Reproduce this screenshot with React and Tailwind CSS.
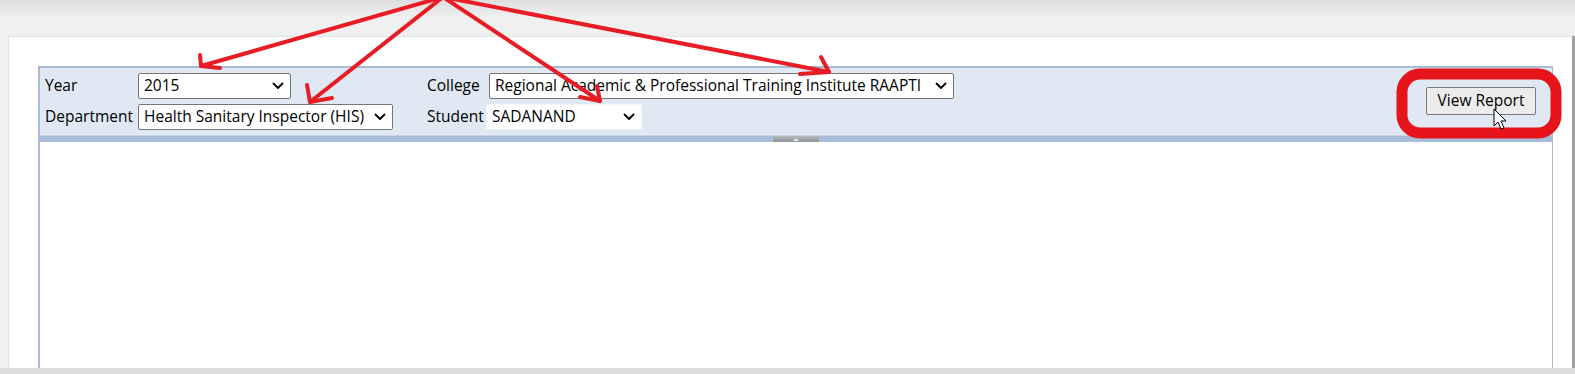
import React from "react";

function Chevron() {
  return (
    <svg width="12" height="8" viewBox="0 0 12 8" className="shrink-0">
      <path d="M1.5 1.5 L6 6 L10.5 1.5" fill="none" stroke="#000" strokeWidth="1.8" strokeLinecap="round" strokeLinejoin="round" />
    </svg>
  );
}

function Select({ value, w, light }) {
  return (
    <div
      className={
        "h-[26px] flex items-center justify-between pl-[5px] pr-[6px] bg-white rounded-[2px] border " +
        (light ? "border-[#f3f5f8]" : "border-[#767676]")
      }
      style={{ width: w }}
    >
      <span className="whitespace-nowrap text-black leading-none">{value}</span>
      <Chevron />
    </div>
  );
}

export default function App() {
  return (
    <div
      className="w-[1575px] h-[374px] bg-[#f0f0f0] relative overflow-hidden flex flex-col text-[15.5px] text-black"
      style={{ fontFamily: '"Open Sans", "Noto Sans", Arial, sans-serif' }}
    >
      {/* top gray area */}
      <div className="h-[36px] shrink-0 bg-gradient-to-b from-[#dedede] via-[#f0f0f0] to-[#f0f0f0]" />
      <div className="flex-1 flex min-h-0">
        <div className="w-[8px] shrink-0" />
        <div className="flex-1 bg-white border-l border-t border-[#e4e4e4] pt-[29px] pl-[29px] pr-[19px] flex flex-col min-h-0">
          <div className="flex-1 flex flex-col border-l-2 border-r border-[#a9b8cc] min-h-0">
            {/* toolbar */}
            <div className="h-[69px] shrink-0 bg-[#dfe8f3] border-t-2 border-[#a9bcd6] flex items-start pl-[5px] pt-[4px]">
              <div className="flex flex-col gap-[4px]">
                <div className="flex items-center h-[27px]">
                  <span className="w-[93px] whitespace-nowrap">Year</span>
                  <Select value="2015" w={153} />
                </div>
                <div className="flex items-center h-[27px]">
                  <span className="w-[93px] whitespace-nowrap">Department</span>
                  <Select value="Health Sanitary Inspector (HIS)" w={255} />
                </div>
              </div>
              <div className="flex flex-col gap-[4px] ml-[34px]">
                <div className="flex items-center h-[27px]">
                  <span className="w-[62px] whitespace-nowrap">College</span>
                  <Select value="Regional Academic & Professional Training Institute RAAPTI" w={465} />
                </div>
                <div className="flex items-center h-[27px]">
                  <span className="w-[59px] whitespace-nowrap">Student</span>
                  <Select value="SADANAND" w={156} light />
                </div>
              </div>
              <div className="flex-1" />
              <div className="pt-[15px] pr-[16px]">
                <div className="w-[110px] h-[28px] flex items-center justify-center bg-[#ececec] border border-[#7a7a7a] rounded-[2px] whitespace-nowrap">
                  View Report
                </div>
              </div>
            </div>
            {/* divider */}
            <div className="h-[7px] shrink-0 bg-[#a7bcd8] border-t border-[#c9d5e4] flex justify-start">
              <div className="ml-[733px] w-[46px] h-full bg-gradient-to-b from-[#b4b8be] to-[#8e949c] flex items-center justify-center">
                <div className="w-0 h-0 border-l-[3px] border-r-[3px] border-b-[3px] border-l-transparent border-r-transparent border-b-[#e8ecf0]" />
              </div>
            </div>
            <div className="flex-1 bg-white" />
          </div>
        </div>
        <div className="w-[3px] shrink-0 bg-[#a0a0a0]" />
      </div>
      <div className="h-[6px] shrink-0 bg-[#dcdcdc]" />

      {/* annotations */}
      <svg className="absolute inset-0 pointer-events-none" width="1575" height="374">
        <g stroke="#e81c24" strokeWidth="4" fill="none" strokeLinecap="round" strokeLinejoin="round">
          <path d="M443 -3 L201 66" />
          <path d="M200 55 L201 66 L220 68" />
          <path d="M443 -3 L310 102" />
          <path d="M307 85 L310 102 L332 98" />
          <path d="M443 -3 L600 101" />
          <path d="M597 86 L600 101 L580 97" />
          <path d="M443 -3 L829 72" />
          <path d="M821 57 L829 72 L800 74" />
        </g>
        <rect x="1402" y="74" width="154" height="59" rx="18" ry="18" fill="none" stroke="#e8141c" strokeWidth="11" />
        {/* cursor */}
        <path d="M1494 109 L1494 126 L1498 122 L1501 129 L1504 128 L1501 121 L1506 121 Z" fill="#fff" stroke="#000" strokeWidth="1" strokeLinejoin="round" />
      </svg>
    </div>
  );
}
